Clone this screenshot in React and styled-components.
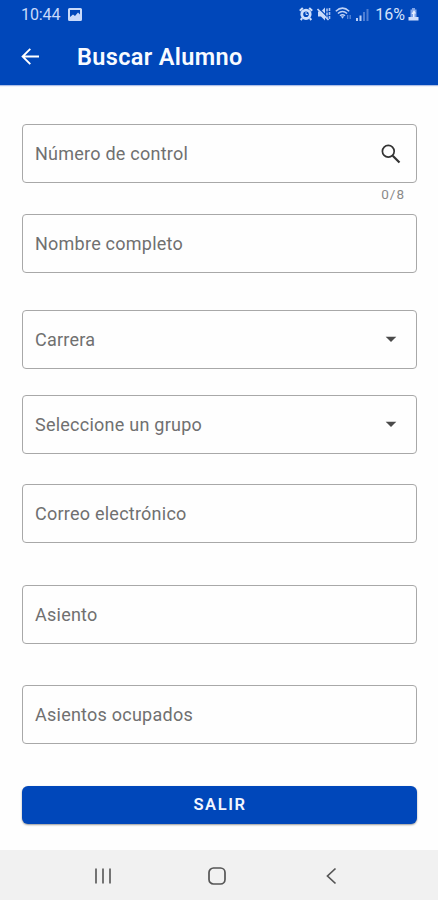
import styled, { createGlobalStyle } from "styled-components";

const GlobalStyle = createGlobalStyle`
  * {
    box-sizing: border-box;
  }
  body {
    margin: 0;
    background: #fefefe;
    font-family: Roboto, "Liberation Sans", sans-serif;
  }
`;

const fields = [
  { label: "Número de control", icon: "search", counter: "0/8", gap: 31 },
  { label: "Nombre completo", gap: 36.5 },
  { label: "Carrera", icon: "arrow", gap: 26 },
  { label: "Seleccione un grupo", icon: "arrow", gap: 30.5 },
  { label: "Correo electrónico", gap: 41.5 },
  { label: "Asiento", gap: 41 },
  { label: "Asientos ocupados", gap: 42 },
];

const SearchIcon = () => (
  <svg width="24" height="24" viewBox="-2 -2 24 24" fill="none" stroke="#333">
    <circle cx="7.3" cy="7.3" r="5.9" strokeWidth="1.7" />
    <path d="M11.7 11.7l6.8 6.8" strokeWidth="2.2" />
  </svg>
);

const ArrowIcon = () => (
  <svg width="24" height="24" viewBox="0 0 24 24" fill="#4a4a4a">
    <path d="M6.700 9.700l5.300 5.300 5.300-5.300z" />
  </svg>
);

const PictureIcon = () => (
  <svg width="14" height="13" viewBox="0 0 14 13">
    <path
      fill="#c9dafa"
      fillRule="evenodd"
      d="M1.5 0h11A1.5 1.5 0 0 1 14 1.5v10a1.5 1.5 0 0 1-1.5 1.5h-11A1.5 1.5 0 0 1 0 11.5v-10A1.5 1.5 0 0 1 1.5 0zM2 2v7l3-2.5 2 1.5 3-3.500 2 2V2z"
    />
  </svg>
);

const AlarmIcon = () => (
  <svg width="14" height="14" viewBox="0 0 14 14" fill="none" stroke="#cfdffc">
    <circle cx="7" cy="7.3" r="4.2" strokeWidth="2.8" />
    <path d="M.8 3.8L3.8 1M13.2 3.8L10.2 1M3.2 11.2L1.7 13M10.8 11.2L12.3 13" strokeWidth="2" />
    <path d="M7 5v2.5h1.8" strokeWidth="1" />
  </svg>
);

const MuteIcon = () => (
  <svg width="14" height="14" viewBox="0 0 14 14">
    <path d="M1 4.5h3l4-4v13L4 9.500H1z" fill="#c9dafa" />
    <path d="M1.5 1l11 11" stroke="#0549b8" strokeWidth="1.2" />
    <path d="M.5 2l11 11" stroke="#c9dafa" strokeWidth="1.6" />
    <path d="M10 1.5v10M12.5 1v12" stroke="#a9c3f3" strokeWidth="1.6" strokeDasharray="3 1" />
  </svg>
);

const WifiIcon = () => (
  <svg width="17" height="14" viewBox="0 0 17 14" fill="none" stroke="#bfd2f7" strokeWidth="1.5">
    <path d="M.8 4.3Q7.5-2 14.2 4.3M2.9 6.5Q7.5 2.4 12.1 6.5M5 8.8Q7.5 6.6 10 8.8" />
    <path d="M5.8 9.3h3.4l-1.7 2.4z" fill="#bfd2f7" stroke="none" />
    <path d="M12.7 8v4M15.2 12V8" stroke="#5f8bda" strokeWidth="1.2" />
  </svg>
);

const SignalIcon = () => (
  <svg width="13" height="13" viewBox="0 0 13 13">
    <path d="M0 10h2v3H0zM3.5 7.5h2V13h-2z" fill="#b9cff8" />
    <path d="M7 4h2v9H7zM10.5 1h2v12h-2z" fill="#4d7dd2" />
  </svg>
);

const ChargeIcon = () => (
  <svg width="11" height="13" viewBox="0 0 11 13">
    <path d="M4 0h3v1.5h1.5V9h-6V1.500H4z" fill="#7fa4e8" />
    <path d="M6 2L3.5 6H5v3h1.5V5.500H8z" fill="#e8f0ff" />
    <path d="M.5 9h10v3.500H.5z" fill="#cfdffc" />
  </svg>
);

const App = () => {
  return (
    <Screen>
      <GlobalStyle />
      <Header>
        <StatusBar>
          <Clock>10:44</Clock>
          <PictureIcon />
          <StatusIcons>
            <AlarmIcon />
            <MuteIcon />
            <WifiIcon />
            <SignalIcon />
          </StatusIcons>
          <Battery>16%</Battery>
          <ChargeIcon />
        </StatusBar>
        <Toolbar>
          <svg width="18" height="18" viewBox="0 0 18 18" fill="none" stroke="#fff" strokeWidth="1.9">
            <path d="M18 8.5H1.8M9.3 .8L1.6 8.5l7.7 7.7" />
          </svg>
          <Title>Buscar Alumno</Title>
        </Toolbar>
      </Header>
      <Form>
        {fields.map((field) => (
          <FieldWrap key={field.label} $gap={field.gap}>
            <Field>
              <Label>{field.label}</Label>
              {field.icon === "search" && <SearchIcon />}
              {field.icon === "arrow" && <ArrowIcon />}
            </Field>
            {field.counter && <Counter>{field.counter}</Counter>}
          </FieldWrap>
        ))}
        <ExitButton>SALIR</ExitButton>
      </Form>
      <NavBar>
        <svg width="18" height="18" viewBox="0 0 18 18" stroke="#666" strokeWidth="1.8">
          <path d="M2 1.5v15M9 1.5v15M16 1.5v15" />
        </svg>
        <svg width="18" height="18" viewBox="0 0 18 18" fill="none" stroke="#555" strokeWidth="1.7">
          <rect x="1" y="1" width="16" height="16" rx="4.5" />
        </svg>
        <svg width="18" height="18" viewBox="0 0 18 18" fill="none" stroke="#555" strokeWidth="1.7">
          <path d="M13.5 1.5L5.5 9l8 7.5" />
        </svg>
      </NavBar>
    </Screen>
  );
};

export default App;

const Screen = styled.div`
  display: flex;
  flex-direction: column;
  width: 438px;
  height: 900px;
  background: #fefefe;
`;

const Header = styled.header`
  height: 85px;
  background: #0047ba;
  box-shadow: 0 1px 1px #aebfe6;
`;

const StatusBar = styled.div`
  display: flex;
  align-items: center;
  height: 28px;
  padding: 0 19px 0 21px;
`;

const Clock = styled.span`
  width: 47px;
  font-size: 16px;
  letter-spacing: -0.1px;
  color: #c9dafa;
`;

const StatusIcons = styled.div`
  display: flex;
  align-items: center;
  gap: 4px;
  margin-left: auto;
`;

const Battery = styled.span`
  margin: 0 3px 0 6px;
  font-size: 16px;
  color: #d5e2fb;
`;

const Toolbar = styled.div`
  display: flex;
  align-items: center;
  height: 57px;
  padding-left: 21px;
`;

const Title = styled.h1`
  margin: 0 0 0 38px;
  font-size: 23.5px;
  font-weight: 600;
  letter-spacing: 0.35px;
  color: #f8fbff;
`;

const Form = styled.main`
  flex: 1;
  padding: 39px 21px 0 22px;
`;

const FieldWrap = styled.div`
  display: flex;
  flex-direction: column;
  height: ${(props) => 59 + props.$gap}px;
`;

const Field = styled.div`
  display: flex;
  flex: none;
  align-items: center;
  justify-content: space-between;
  height: 59px;
  padding: 0 13px 0 12px;
  border: 1px solid #a8a8a8;
  border-radius: 4px;
`;

const Label = styled.span`
  font-size: 18px;
  letter-spacing: 0.24px;
  color: #707070;
`;

const Counter = styled.span`
  align-self: flex-end;
  margin: 3px 12px 0 0;
  font-size: 13.5px;
  line-height: 16px;
  letter-spacing: 1px;
  color: #8a8a8a;
`;

const ExitButton = styled.button`
  display: block;
  width: 100%;
  height: 38px;
  padding: 0 0 0 1px;
  border: 0;
  border-radius: 6px;
  background: #0047ba;
  box-shadow: 0 1px 2px rgba(0, 0, 0, 0.4);
  font-family: inherit;
  font-size: 16.5px;
  font-weight: 600;
  letter-spacing: 1.6px;
  color: #f2f6ff;
`;

const NavBar = styled.nav`
  display: flex;
  align-items: center;
  gap: 96px;
  height: 50px;
  padding: 2px 0 0 94px;
  background: #f1f1f1;
`;
